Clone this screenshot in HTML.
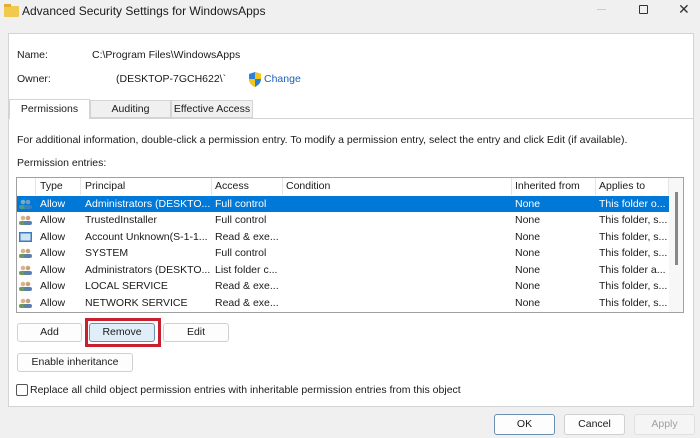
<!DOCTYPE html>
<html><head><style>
*{box-sizing:border-box;margin:0;padding:0}
body{width:700px;height:438px;background:#f0f0f0;font-family:"Liberation Sans",sans-serif;font-size:10.5px;color:#1a1a1a;position:relative;overflow:hidden}
.a{position:absolute;white-space:nowrap}
.btn{position:absolute;background:#fdfdfd;border:1px solid #d0d0d0;border-radius:3px;text-align:center;font-size:10.5px;line-height:17px}
.row{position:absolute;left:17px;width:652px;height:16.6px;line-height:16px;white-space:nowrap}
.row span{position:absolute;white-space:nowrap}
.sel{background:#0078d7;color:#fff}
.ic{position:absolute;left:2px;top:3px;width:13px;height:10px}
</style></head><body>
<div class="a" style="left:4px;top:6px;width:15px;height:11px;background:#f2c94c;border-radius:1px"></div>
<div class="a" style="left:4px;top:4px;width:7px;height:3px;background:#e0b030"></div>
<div class="a" style="left:22px;top:4px;font-size:12px">Advanced Security Settings for WindowsApps</div>
<div class="a" style="left:597px;top:9px;width:9px;height:1px;background:#ccc"></div>
<div class="a" style="left:639px;top:5px;width:9px;height:9px;border:1px solid #333;border-radius:1px"></div>
<div class="a" style="left:678px;top:1px;font-size:14px;color:#333">✕</div>
<div class="a" style="left:8px;top:33px;width:686px;height:374px;background:#fff;border:1px solid #d4d4d4"></div>
<div class="a" style="left:17px;top:49px">Name:</div>
<div class="a" style="left:92px;top:49px">C:\Program Files\WindowsApps</div>
<div class="a" style="left:17px;top:73px">Owner:</div>
<div class="a" style="left:116px;top:73px">(DESKTOP-7GCH622\`</div>
<svg class="a" style="left:248px;top:72px" width="14" height="15" viewBox="0 0 14 15"><path d="M7 0L13 2V7C13 11 10 13.5 7 15C4 13.5 1 11 1 7V2Z" fill="#2f7fd6"/><path d="M7 0V7H13V2ZM1 7H7V15C4 13.5 1 11 1 7Z" fill="#f5c518"/></svg>
<div class="a" style="left:264px;top:73px;color:#1a5fb4">Change</div>
<div class="a" style="left:9px;top:99px;width:81px;height:20px;background:#fff;border:1px solid #d4d4d4;border-bottom:none;text-align:center;line-height:19px;z-index:2">Permissions</div>
<div class="a" style="left:90px;top:100px;width:81px;height:18px;background:#f0f0f0;border:1px solid #d4d4d4;text-align:center;line-height:17px">Auditing</div>
<div class="a" style="left:171px;top:100px;width:82px;height:18px;background:#f0f0f0;border:1px solid #d4d4d4;text-align:center;line-height:17px">Effective Access</div>
<div class="a" style="left:8px;top:118px;width:686px;height:1px;background:#d4d4d4"></div>
<div class="a" style="left:17px;top:134px">For additional information, double-click a permission entry. To modify a permission entry, select the entry and click Edit (if available).</div>
<div class="a" style="left:17px;top:157px">Permission entries:</div>
<div class="a" style="left:16px;top:177px;width:668px;height:136px;border:1px solid #a0a0a0;background:#fff"></div>
<div class="a" style="left:17px;top:178px;width:652px;height:17px;line-height:17px">
<span class="a" style="left:23px">Type</span><span class="a" style="left:68px">Principal</span><span class="a" style="left:198px">Access</span><span class="a" style="left:269px">Condition</span><span class="a" style="left:498px">Inherited from</span><span class="a" style="left:582px">Applies to</span>
<span class="a" style="left:18px;top:0;width:1px;height:17px;background:#e5e5e5"></span><span class="a" style="left:63px;top:0;width:1px;height:17px;background:#e5e5e5"></span><span class="a" style="left:194px;top:0;width:1px;height:17px;background:#e5e5e5"></span><span class="a" style="left:265px;top:0;width:1px;height:17px;background:#e5e5e5"></span><span class="a" style="left:494px;top:0;width:1px;height:17px;background:#e5e5e5"></span><span class="a" style="left:578px;top:0;width:1px;height:17px;background:#e5e5e5"></span><span class="a" style="left:651px;top:0;width:1px;height:17px;background:#e5e5e5"></span>
</div>
<div class="a" style="left:669px;top:178px;width:14px;height:134px;background:#f7f7f7"></div>
<div class="a" style="left:675px;top:192px;width:3px;height:73px;background:#888"></div>

<div class="row sel" style="top:195.5px"><svg class="ic" viewBox="0 0 13 10"><circle cx="4" cy="3" r="2.3" fill="#6fb1c8"/><circle cx="9" cy="3" r="2.3" fill="#6f9fc8"/><rect x="0" y="6" width="8" height="4" rx="2" fill="#4a9b8a"/><rect x="5" y="6" width="8" height="4" rx="2" fill="#3d7fb8"/></svg><span style="left:23px">Allow</span><span style="left:68px">Administrators (DESKTO...</span><span style="left:198px">Full control</span><span style="left:498px">None</span><span style="left:582px">This folder o...</span></div>
<div class="row" style="top:212px"><svg class="ic" viewBox="0 0 13 10"><circle cx="4" cy="3" r="2.3" fill="#d9b48a"/><circle cx="9" cy="3" r="2.3" fill="#c9a47a"/><rect x="0" y="6" width="8" height="4" rx="2" fill="#6a9a5a"/><rect x="5" y="6" width="8" height="4" rx="2" fill="#5a7fb0"/></svg><span style="left:23px">Allow</span><span style="left:68px">TrustedInstaller</span><span style="left:198px">Full control</span><span style="left:498px">None</span><span style="left:582px">This folder, s...</span></div>
<div class="row" style="top:228.6px"><svg class="ic" viewBox="0 0 13 10"><rect x="0" y="0" width="13" height="10" fill="#3a7cc0"/><rect x="1.5" y="1.5" width="10" height="7" fill="#cfe3f5"/></svg><span style="left:23px">Allow</span><span style="left:68px">Account Unknown(S-1-1...</span><span style="left:198px">Read &amp; exe...</span><span style="left:498px">None</span><span style="left:582px">This folder, s...</span></div>
<div class="row" style="top:245.2px"><svg class="ic" viewBox="0 0 13 10"><circle cx="4" cy="3" r="2.3" fill="#d9b48a"/><circle cx="9" cy="3" r="2.3" fill="#c9a47a"/><rect x="0" y="6" width="8" height="4" rx="2" fill="#6a9a5a"/><rect x="5" y="6" width="8" height="4" rx="2" fill="#5a7fb0"/></svg><span style="left:23px">Allow</span><span style="left:68px">SYSTEM</span><span style="left:198px">Full control</span><span style="left:498px">None</span><span style="left:582px">This folder, s...</span></div>
<div class="row" style="top:261.8px"><svg class="ic" viewBox="0 0 13 10"><circle cx="4" cy="3" r="2.3" fill="#d9b48a"/><circle cx="9" cy="3" r="2.3" fill="#c9a47a"/><rect x="0" y="6" width="8" height="4" rx="2" fill="#6a9a5a"/><rect x="5" y="6" width="8" height="4" rx="2" fill="#5a7fb0"/></svg><span style="left:23px">Allow</span><span style="left:68px">Administrators (DESKTO...</span><span style="left:198px">List folder c...</span><span style="left:498px">None</span><span style="left:582px">This folder a...</span></div>
<div class="row" style="top:278.4px"><svg class="ic" viewBox="0 0 13 10"><circle cx="4" cy="3" r="2.3" fill="#d9b48a"/><circle cx="9" cy="3" r="2.3" fill="#c9a47a"/><rect x="0" y="6" width="8" height="4" rx="2" fill="#6a9a5a"/><rect x="5" y="6" width="8" height="4" rx="2" fill="#5a7fb0"/></svg><span style="left:23px">Allow</span><span style="left:68px">LOCAL SERVICE</span><span style="left:198px">Read &amp; exe...</span><span style="left:498px">None</span><span style="left:582px">This folder, s...</span></div>
<div class="row" style="top:295px"><svg class="ic" viewBox="0 0 13 10"><circle cx="4" cy="3" r="2.3" fill="#d9b48a"/><circle cx="9" cy="3" r="2.3" fill="#c9a47a"/><rect x="0" y="6" width="8" height="4" rx="2" fill="#6a9a5a"/><rect x="5" y="6" width="8" height="4" rx="2" fill="#5a7fb0"/></svg><span style="left:23px">Allow</span><span style="left:68px">NETWORK SERVICE</span><span style="left:198px">Read &amp; exe...</span><span style="left:498px">None</span><span style="left:582px">This folder, s...</span></div>

<div class="btn" style="left:17px;top:323px;width:65px;height:19px">Add</div>
<div class="a" style="left:85px;top:318px;width:76px;height:29px;border:3px solid #c8202f"></div>
<div class="btn" style="left:89px;top:323px;width:66px;height:19px;background:#e0eef9;border-color:#6a8fb0">Remove</div>
<div class="btn" style="left:163px;top:323px;width:66px;height:19px">Edit</div>
<div class="btn" style="left:17px;top:353px;width:116px;height:19px">Enable inheritance</div>
<div class="a" style="left:16px;top:384px;width:12px;height:12px;border:1px solid #555;border-radius:2px;background:#fff"></div>
<div class="a" style="left:30px;top:384px">Replace all child object permission entries with inheritable permission entries from this object</div>
<div class="btn" style="left:494px;top:414px;width:61px;height:21px;line-height:19px;border-color:#6a8fb0">OK</div>
<div class="btn" style="left:564px;top:414px;width:61px;height:21px;line-height:19px">Cancel</div>
<div class="btn" style="left:634px;top:414px;width:61px;height:21px;line-height:19px;background:#f5f5f5;border-color:#e0e0e0;color:#a0a0a0">Apply</div>
</body></html>
